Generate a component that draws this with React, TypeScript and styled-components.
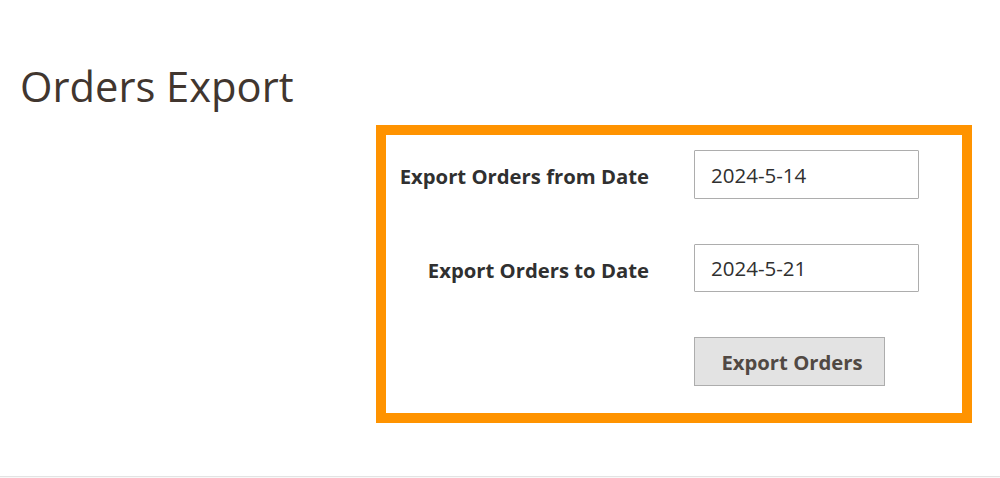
import React, { useState } from "react";
import styled, { createGlobalStyle } from "styled-components";

const GlobalStyle = createGlobalStyle`
  html, body {
    margin: 0;
    padding: 0;
    background: #ffffff;
    font-family: "Open Sans", "Liberation Sans", Arial, sans-serif;
  }
  * {
    box-sizing: border-box;
  }
`;

const Page = styled.div`
  display: flex;
  flex-direction: column;
  min-height: 478px;
`;

const Main = styled.main`
  height: 476px;
  padding: 61px 20px 0;
`;

const Title = styled.h1`
  margin: 0;
  font-size: 41.7px;
  line-height: 50px;
  font-weight: 400;
  color: #41362f;
`;

const Highlight = styled.div`
  margin: 14px 0 0 356px;
  width: 596px;
  border: 10px solid #ff9300;
  padding: 15px 0 27px;
`;

const Form = styled.form`
  display: grid;
  grid-template-columns: 263px 225px;
  column-gap: 45px;
  row-gap: 45px;
  align-items: center;
`;

const Label = styled.label`
  text-align: right;
  font-size: 20.3px;
  font-weight: 700;
  color: #303030;
  padding-top: 3px;
`;

const Input = styled.input<{ $h?: number }>`
  height: ${(p) => p.$h ?? 48}px;
  width: 225px;
  border: 1px solid #adadad;
  border-radius: 1px;
  padding: 0 16px;
  font-family: "Open Sans", "Liberation Sans", Arial, sans-serif;
  font-size: 20.5px;
  color: #303030;
  background: #fff;
  outline: none;
`;

const Button = styled.button`
  grid-column: 2;
  justify-self: start;
  height: 49px;
  width: 191px;
  padding: 0 0 0 5px;
  border: 1px solid #adadad;
  border-radius: 0;
  background: #e3e3e3;
  color: #514943;
  font-family: "Open Sans", "Liberation Sans", Arial, sans-serif;
  font-size: 20.3px;
  font-weight: 700;
  cursor: pointer;
`;

const Footer = styled.footer`
  flex: 1;
  border-top: 1px solid #e3e3e3;
  background: #f8f8f8;
`;

const App = () => {
  const [from, setFrom] = useState("2024-5-14");
  const [to, setTo] = useState("2024-5-21");

  return (
    <>
      <GlobalStyle />
      <Page>
        <Main>
          <Title>Orders Export</Title>
          <Highlight>
            <Form onSubmit={(e) => e.preventDefault()}>
              <Label htmlFor="from_date">Export Orders from Date</Label>
              <Input id="from_date" $h={49} value={from} onChange={(e) => setFrom(e.target.value)} />
              <Label htmlFor="to_date">Export Orders to Date</Label>
              <Input id="to_date" value={to} onChange={(e) => setTo(e.target.value)} />
              <Button type="submit">Export Orders</Button>
            </Form>
          </Highlight>
        </Main>
        <Footer />
      </Page>
    </>
  );
};

export default App;
